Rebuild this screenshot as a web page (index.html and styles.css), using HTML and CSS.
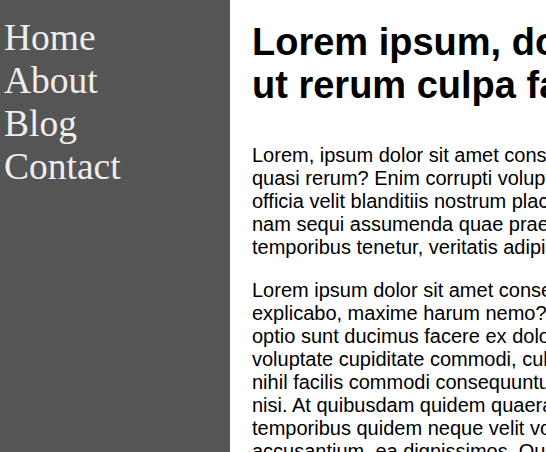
FILE: index.html
```html
<!DOCTYPE html>
<html lang="en">
<head>
<meta charset="utf-8">
<title>Lorem ipsum</title>
<link rel="stylesheet" href="styles.css">
</head>
<body>
<div class="page">
  <aside class="sidebar">
    <nav class="nav">
      <a class="nav-link" href="#">Home</a>
      <a class="nav-link" href="#">About</a>
      <a class="nav-link" href="#">Blog</a>
      <a class="nav-link" href="#">Contact</a>
    </nav>
  </aside>
  <main class="content">
    <h1 class="title">Lorem ipsum, dolor sit amet consectetur adipisicing elit. Quos,
ut rerum culpa facere dolores.</h1>
    <p class="text">Lorem, ipsum dolor sit amet consectetur adipisicing elit. Officiis
quasi rerum? Enim corrupti voluptatum dolorem eaque sapiente,
officia velit blanditiis nostrum placeat in ducimus minima,
nam sequi assumenda quae praesentium cum laboriosam sunt,
temporibus tenetur, veritatis adipisci.</p>
    <p class="text">Lorem ipsum dolor sit amet consectetur adipisicing elit. Quae
explicabo, maxime harum nemo? Laudantium quos dolorum
optio sunt ducimus facere ex dolores provident, rerum et
voluptate cupiditate commodi, culpa eveniet doloribus
nihil facilis commodi consequuntur ipsa tempore iusto
nisi. At quibusdam quidem quaerat sapiente eligendi
temporibus quidem neque velit voluptas asperiores,
accusantium, ea dignissimos. Quis, nobis.</p>
  </main>
</div>
</body>
</html>
```
FILE: styles.css
```css
html, body {
  margin: 0;
  padding: 0;
  background: #fff;
  overflow: hidden;
}

.page {
  display: flex;
  align-items: stretch;
  min-height: 100vh;
  width: 1800px;
}

.sidebar {
  flex: 0 0 230px;
  background: #555555;
  padding: 16px 0 0 4px;
  box-sizing: border-box;
}

.nav {
  display: flex;
  flex-direction: column;
}

.nav-link {
  font-family: "Liberation Serif", "Times New Roman", serif;
  font-size: 37.5px;
  color: #eeeeee;
  text-decoration: none;
}

.content {
  flex: 1;
  padding: 0 22px;
  font-family: "Liberation Sans", Arial, sans-serif;
  color: #000;
}

.title {
  font-size: 38px;
  font-weight: bold;
  margin: 21px 0 37px;
  white-space: pre-line;
}

.text {
  font-size: 20px;
  margin: 0 0 20px;
  white-space: pre-line;
}
```
